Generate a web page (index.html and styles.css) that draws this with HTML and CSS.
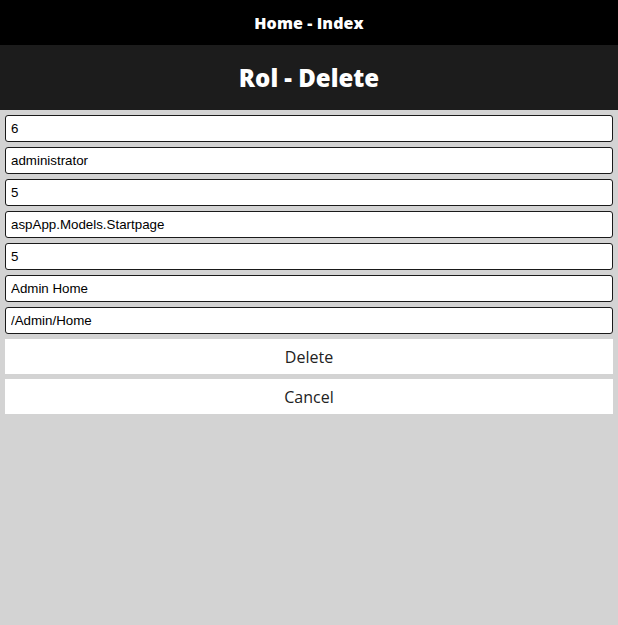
FILE: index.html
```html
<!DOCTYPE html>
<html lang="en">
<head>
<meta charset="utf-8">
<title>Rol - Delete</title>
<link rel="stylesheet" href="styles.css">
</head>
<body>
<header class="topbar">
  <a class="topbar-link" href="#">Home - Index</a>
</header>
<div class="titlebar">
  <h1 class="title">Rol - Delete</h1>
</div>
<form class="form">
  <input class="field" type="text" value="6">
  <input class="field" type="text" value="administrator">
  <input class="field" type="text" value="5">
  <input class="field" type="text" value="aspApp.Models.Startpage">
  <input class="field" type="text" value="5">
  <input class="field" type="text" value="Admin Home">
  <input class="field" type="text" value="/Admin/Home">
  <button class="btn" type="button">Delete</button>
  <button class="btn" type="button">Cancel</button>
</form>
</body>
</html>
```

FILE: styles.css
```css
html, body {
  margin: 0;
  padding: 0;
}
body {
  background: #d3d3d3;
  min-height: 625px;
  font-family: "Open Sans", "Noto Sans", sans-serif;
}
.topbar {
  height: 45px;
  background: #000;
  display: flex;
  align-items: center;
  justify-content: center;
}
.topbar-link {
  color: #fff;
  text-decoration: none;
  font-weight: 800;
  font-size: 16px;
  letter-spacing: 0.1px;
}
.titlebar {
  height: 65px;
  background: #1c1c1c;
  display: flex;
  align-items: center;
  justify-content: center;
}
.title {
  margin: 0;
  color: #fff;
  font-size: 24px;
  font-weight: 800;
}
.form {
  display: flex;
  flex-direction: column;
  gap: 5px;
  padding: 5px;
}
.field {
  box-sizing: border-box;
  height: 27px;
  margin: 0;
  padding: 0 5px;
  border: 1px solid #1a1a1a;
  border-radius: 3px;
  background: #fff;
  font-family: "Liberation Sans", Arial, sans-serif;
  font-size: 13.33px;
  color: #000;
}
.btn {
  height: 35px;
  margin: 0;
  border: none;
  background: #fff;
  font-family: "Open Sans", "Noto Sans", sans-serif;
  font-size: 16px;
  font-weight: 400;
  color: #222;
  cursor: pointer;
}
```
